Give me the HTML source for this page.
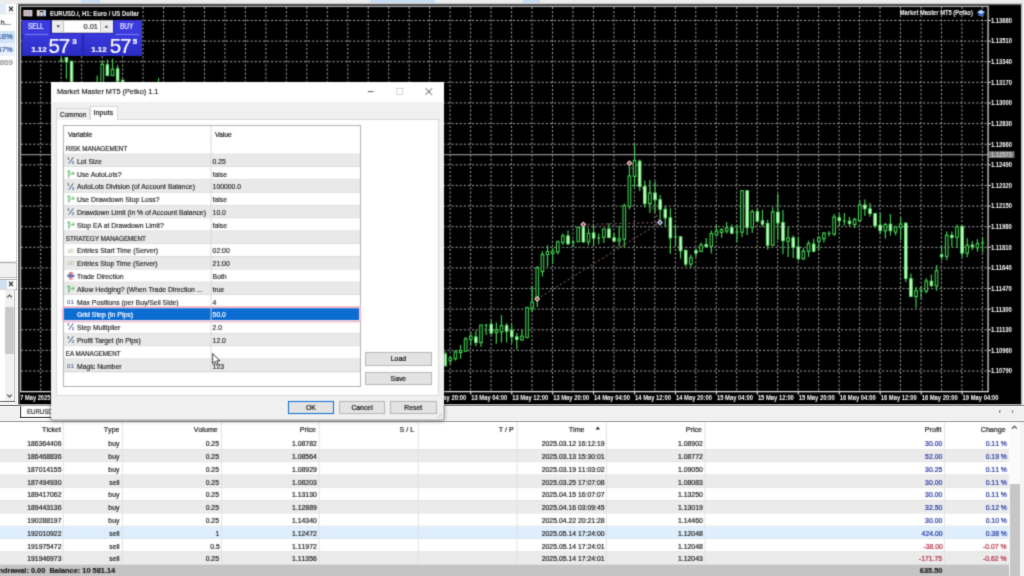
<!DOCTYPE html>
<html><head><meta charset="utf-8"><title>MT5</title>
<style>
*{margin:0;padding:0;box-sizing:border-box}
html,body{width:1024px;height:576px;overflow:hidden;background:#f0f0f0;font-family:"Liberation Sans",sans-serif;}
.a{position:absolute}
.t{position:absolute;white-space:nowrap;line-height:1}
#chart{position:absolute;left:0;top:0;width:1024px;height:576px}
.ax{font:bold 6.4px "Liberation Sans",sans-serif;fill:#fff}
.tm{font:bold 6.6px "Liberation Sans",sans-serif;fill:#fff}
/* dialog */
#dlg{position:absolute;left:51px;top:82px;width:392.6px;height:338.2px;background:#f0f0f0;box-shadow:0 1px 4px rgba(0,0,0,.45), 0 0 1px rgba(0,0,0,.6)}
.row{position:absolute;left:0;width:296px;height:12.8px}
.row .n{position:absolute;left:13px;top:3.8px;-webkit-text-stroke:.14px #222;font-size:6.85px;color:#1a1a1a;white-space:nowrap;line-height:1}
.row .h{position:absolute;left:1.7px;top:3.3px;-webkit-text-stroke:.15px #222;font-size:6.3px;color:#1a1a1a;white-space:nowrap;line-height:1}
.row .v{position:absolute;left:148.6px;top:3.8px;-webkit-text-stroke:.14px #222;font-size:6.85px;color:#1a1a1a;white-space:nowrap;line-height:1}
.row .ic{position:absolute;left:2.5px;top:2px;width:9px;height:9px}
.g{background:#e9e9e9}
.w{background:#fff}
.btn{position:absolute;height:13.2px;background:#e3e3e3;border:1px solid #b6b6b6;font-size:6.85px;color:#1a1a1a;text-align:center;line-height:11.6px}
/* table */
.tr{position:absolute;left:0;width:1009px;height:12.8px}
.tr>span,.th>span{font-kerning:none;position:absolute;top:3.5px;font-size:7.7px;color:#1e1e1e;white-space:nowrap;line-height:1;text-align:right}
.blue{color:#2034a0 !important}
.red{color:#b42a40 !important}
.vl{position:absolute;top:422px;width:1px;height:142px;background:#e2e2e2}
#wrap{-webkit-text-stroke-width:.22px;position:absolute;left:0;top:0;width:1024px;height:576px;overflow:hidden;filter:url(#gb)}
</style></head><body><svg width="0" height="0" style="position:absolute"><filter id="gb" x="0" y="0" width="100%" height="100%" color-interpolation-filters="sRGB"><feConvolveMatrix order="3" kernelMatrix="0.02768 0.11101 0.02768 0.11101 0.44521 0.11101 0.02768 0.11101 0.02768" edgeMode="duplicate" preserveAlpha="true"/></filter></svg><div id="wrap">

<div class="a" style="left:0;top:0;width:1024px;height:4px;background:#ececec"></div>
<div class="a" style="left:81px;top:0;width:19px;height:3px;background:#c9def2"></div>
<div class="a" style="left:370px;top:0;width:65px;height:3px;background:#c9def2"></div>
<div class="a" style="left:523px;top:0;width:17px;height:3px;background:#c9def2"></div>
<div class="a" style="left:0;top:4px;width:16.5px;height:258px;background:#fff"></div>
<div class="a" style="left:0;top:4px;width:6px;height:8.5px;background:#e3ecf6"></div>
<div class="t" style="left:8.4px;top:5px;font-size:8.5px;color:#222;font-weight:bold">×</div>
<div class="a" style="left:0;top:13.2px;width:15px;height:1px;background:#e3e3e3"></div>
<div class="t" style="left:0.5px;top:18.5px;font-size:7.6px;color:#333">h...</div>
<div class="a" style="left:0;top:30.5px;width:14.5px;height:12.5px;background:#cfe3f8"></div>
<div class="t" style="left:-2.4px;top:33px;font-size:7.6px;color:#34569c">16%</div>
<div class="a" style="left:0;top:43px;width:14.5px;height:12.5px;background:#e9f2fc"></div>
<div class="t" style="left:-2.4px;top:45.8px;font-size:7.6px;color:#34569c">67%</div>
<div class="t" style="left:0px;top:58.5px;font-size:7.6px;color:#8a8a8a">869</div>
<div class="a" style="left:0;top:261.6px;width:15px;height:1.2px;background:#9a9a9a"></div>
<div class="a" style="left:0;top:263px;width:16.5px;height:15px;background:#f0f0f0"></div>
<div class="a" style="left:0;top:278.5px;width:16.5px;height:11px;background:#fbfbfb;border-top:1px solid #e0e0e0;border-bottom:1px solid #d8d8d8"></div>
<div class="a" style="left:0;top:279.5px;width:6.5px;height:9.5px;background:#cfe0f3"></div>
<div class="t" style="left:8.6px;top:279.6px;font-size:8.5px;color:#222;font-weight:bold">×</div>
<div class="a" style="left:0;top:290px;width:5px;height:111px;background:#fff"></div>
<div class="a" style="left:5px;top:290px;width:10px;height:111px;background:#f1f1f1"></div>
<div class="a" style="left:5px;top:306.5px;width:9px;height:47px;background:#c9c9c9"></div>
<svg class="a" style="left:5px;top:291px" width="10" height="112"><path d="M2.2 6.4 L4.5 4 L6.8 6.4" fill="none" stroke="#444" stroke-width="1.1"/><path d="M2.2 103.6 L4.5 106 L6.8 103.6" fill="none" stroke="#444" stroke-width="1.1"/></svg>
<div class="a" style="left:0;top:400.6px;width:15px;height:1.2px;background:#8a8a8a"></div>
<svg id="chart" viewBox="0 0 1024 576">
<defs><clipPath id="cc"><rect x="21" y="7" width="967" height="385"/></clipPath></defs>
<rect x="18.2" y="3.8" width="1004.3" height="400.8" fill="#5a5a5a"/>
<rect x="19.9" y="5.2" width="1001.2" height="398.8" fill="#000"/>
<rect x="1021.1" y="4" width="1.4" height="400.6" fill="#cfcfcf"/>
<rect x="1022.5" y="4" width="1.5" height="400.6" fill="#fafafa"/>
<path d="M20.6 392 L20.6 6.3 L988.1 6.3" fill="none" stroke="#b9b9b9" stroke-width="1.3"/>
<g clip-path="url(#cc)" stroke="#a2a2a2" stroke-width="1" stroke-dasharray="2.1 2" fill="none">
<path d="M40.70 7V391.5"/>
<path d="M61.17 7V391.5"/>
<path d="M81.64 7V391.5"/>
<path d="M102.12 7V391.5"/>
<path d="M122.59 7V391.5"/>
<path d="M143.06 7V391.5"/>
<path d="M163.53 7V391.5"/>
<path d="M184.00 7V391.5"/>
<path d="M204.48 7V391.5"/>
<path d="M224.95 7V391.5"/>
<path d="M245.42 7V391.5"/>
<path d="M265.89 7V391.5"/>
<path d="M286.36 7V391.5"/>
<path d="M306.84 7V391.5"/>
<path d="M327.31 7V391.5"/>
<path d="M347.78 7V391.5"/>
<path d="M368.25 7V391.5"/>
<path d="M388.72 7V391.5"/>
<path d="M409.20 7V391.5"/>
<path d="M429.67 7V391.5"/>
<path d="M450.14 7V391.5"/>
<path d="M470.61 7V391.5"/>
<path d="M491.08 7V391.5"/>
<path d="M511.56 7V391.5"/>
<path d="M532.03 7V391.5"/>
<path d="M552.50 7V391.5"/>
<path d="M572.97 7V391.5"/>
<path d="M593.44 7V391.5"/>
<path d="M613.92 7V391.5"/>
<path d="M634.39 7V391.5"/>
<path d="M654.86 7V391.5"/>
<path d="M675.33 7V391.5"/>
<path d="M695.80 7V391.5"/>
<path d="M716.28 7V391.5"/>
<path d="M736.75 7V391.5"/>
<path d="M757.22 7V391.5"/>
<path d="M777.69 7V391.5"/>
<path d="M798.16 7V391.5"/>
<path d="M818.64 7V391.5"/>
<path d="M839.11 7V391.5"/>
<path d="M859.58 7V391.5"/>
<path d="M880.05 7V391.5"/>
<path d="M900.52 7V391.5"/>
<path d="M921.00 7V391.5"/>
<path d="M941.47 7V391.5"/>
<path d="M961.94 7V391.5"/>
<path d="M982.41 7V391.5"/>
<path d="M21 20.50H987.5"/>
<path d="M21 41.12H987.5"/>
<path d="M21 61.74H987.5"/>
<path d="M21 82.36H987.5"/>
<path d="M21 102.98H987.5"/>
<path d="M21 123.60H987.5"/>
<path d="M21 144.22H987.5"/>
<path d="M21 164.84H987.5"/>
<path d="M21 185.46H987.5"/>
<path d="M21 206.08H987.5"/>
<path d="M21 226.70H987.5"/>
<path d="M21 247.32H987.5"/>
<path d="M21 267.94H987.5"/>
<path d="M21 288.56H987.5"/>
<path d="M21 309.18H987.5"/>
<path d="M21 329.80H987.5"/>
<path d="M21 350.42H987.5"/>
<path d="M21 371.04H987.5"/>
</g>
<rect x="21.3" y="7" width="119" height="12.6" fill="#000"/>
<path d="M21 154.6H988" stroke="#8c8c8c" stroke-width="1.1"/>
<g stroke="#94686a" stroke-width="1" stroke-dasharray="2 2.5" fill="none">
<path d="M537.1 299.1L660 222.5"/><path d="M583.3 224.5L660 222.5"/><path d="M629.4 163.3L660 222.5"/>
</g>
<g clip-path="url(#cc)">
<path d="M61.33 57.5V62.5" stroke="#44d455" stroke-width="1.15"/>
<path d="M59.73 60.0H62.93" stroke="#44d455" stroke-width="1.1"/>
<path d="M66.45 57.5V78.8" stroke="#44d455" stroke-width="1.15"/>
<rect x="65.15" y="57.5" width="2.6" height="4.4" fill="#c8ffc8" stroke="#62e06c" stroke-width="0.9"/>
<path d="M71.57 61.2V90.0" stroke="#44d455" stroke-width="1.15"/>
<rect x="70.27" y="61.2" width="2.6" height="28.8" fill="#c8ffc8" stroke="#62e06c" stroke-width="0.9"/>
<path d="M97.16 75.6V90.0" stroke="#44d455" stroke-width="1.15"/>
<path d="M95.56 85.0H98.76" stroke="#44d455" stroke-width="1.1"/>
<path d="M102.28 60.6V90.0" stroke="#44d455" stroke-width="1.15"/>
<rect x="100.98" y="64.4" width="2.6" height="25.6" fill="#000" stroke="#44d455" stroke-width="1.05"/>
<path d="M107.39 59.4V75.6" stroke="#44d455" stroke-width="1.15"/>
<rect x="106.09" y="64.8" width="2.6" height="10.8" fill="#c8ffc8" stroke="#62e06c" stroke-width="0.9"/>
<path d="M112.51 58.8V75.6" stroke="#44d455" stroke-width="1.15"/>
<rect x="111.21" y="69.4" width="2.6" height="6.2" fill="#000" stroke="#44d455" stroke-width="1.05"/>
<path d="M117.63 65.0V81.2" stroke="#44d455" stroke-width="1.15"/>
<rect x="116.33" y="68.8" width="2.6" height="12.5" fill="#c8ffc8" stroke="#62e06c" stroke-width="0.9"/>
<path d="M122.75 80.0V90.0" stroke="#44d455" stroke-width="1.15"/>
<rect x="121.45" y="80.0" width="2.6" height="10.0" fill="#c8ffc8" stroke="#62e06c" stroke-width="0.9"/>
<path d="M158.57 78.0V90.0" stroke="#44d455" stroke-width="1.15"/>
<path d="M156.97 88.0H160.17" stroke="#44d455" stroke-width="1.1"/>
<path d="M445.18 351.2V366.0" stroke="#44d455" stroke-width="1.15"/>
<rect x="443.88" y="353.8" width="2.6" height="12.2" fill="#c8ffc8" stroke="#62e06c" stroke-width="0.9"/>
<path d="M450.30 356.2V364.0" stroke="#44d455" stroke-width="1.15"/>
<rect x="449.00" y="358.1" width="2.6" height="2.5" fill="#000" stroke="#44d455" stroke-width="1.05"/>
<path d="M455.42 350.6V360.6" stroke="#44d455" stroke-width="1.15"/>
<rect x="454.12" y="351.9" width="2.6" height="6.9" fill="#000" stroke="#44d455" stroke-width="1.05"/>
<path d="M460.54 345.0V358.8" stroke="#44d455" stroke-width="1.15"/>
<rect x="459.24" y="350.6" width="2.6" height="1.9" fill="#000" stroke="#44d455" stroke-width="1.05"/>
<path d="M465.65 336.9V351.2" stroke="#44d455" stroke-width="1.15"/>
<rect x="464.35" y="338.8" width="2.6" height="12.5" fill="#000" stroke="#44d455" stroke-width="1.05"/>
<path d="M470.77 332.5V345.6" stroke="#44d455" stroke-width="1.15"/>
<rect x="469.47" y="336.2" width="2.6" height="3.1" fill="#000" stroke="#44d455" stroke-width="1.05"/>
<path d="M475.89 330.6V346.2" stroke="#44d455" stroke-width="1.15"/>
<rect x="474.59" y="336.9" width="2.6" height="5.6" fill="#c8ffc8" stroke="#62e06c" stroke-width="0.9"/>
<path d="M481.01 325.0V346.9" stroke="#44d455" stroke-width="1.15"/>
<rect x="479.71" y="325.0" width="2.6" height="17.5" fill="#000" stroke="#44d455" stroke-width="1.05"/>
<path d="M486.13 324.4V335.0" stroke="#44d455" stroke-width="1.15"/>
<path d="M484.53 325.0H487.73" stroke="#44d455" stroke-width="1.1"/>
<path d="M491.24 320.6V335.0" stroke="#44d455" stroke-width="1.15"/>
<rect x="489.94" y="324.4" width="2.6" height="8.7" fill="#c8ffc8" stroke="#62e06c" stroke-width="0.9"/>
<path d="M496.36 322.5V343.8" stroke="#44d455" stroke-width="1.15"/>
<rect x="495.06" y="330.0" width="2.6" height="2.5" fill="#000" stroke="#44d455" stroke-width="1.05"/>
<path d="M501.48 315.0V342.5" stroke="#44d455" stroke-width="1.15"/>
<rect x="500.18" y="325.6" width="2.6" height="6.3" fill="#000" stroke="#44d455" stroke-width="1.05"/>
<path d="M506.60 323.1V342.5" stroke="#44d455" stroke-width="1.15"/>
<rect x="505.30" y="325.6" width="2.6" height="5.6" fill="#c8ffc8" stroke="#62e06c" stroke-width="0.9"/>
<path d="M511.72 324.4V343.1" stroke="#44d455" stroke-width="1.15"/>
<rect x="510.42" y="330.6" width="2.6" height="6.3" fill="#c8ffc8" stroke="#62e06c" stroke-width="0.9"/>
<path d="M516.83 333.1V349.4" stroke="#44d455" stroke-width="1.15"/>
<rect x="515.53" y="336.9" width="2.6" height="2.5" fill="#c8ffc8" stroke="#62e06c" stroke-width="0.9"/>
<path d="M521.95 330.0V340.6" stroke="#44d455" stroke-width="1.15"/>
<rect x="520.65" y="336.2" width="2.6" height="3.8" fill="#000" stroke="#44d455" stroke-width="1.05"/>
<path d="M527.07 307.5V337.5" stroke="#44d455" stroke-width="1.15"/>
<rect x="525.77" y="307.5" width="2.6" height="30.0" fill="#000" stroke="#44d455" stroke-width="1.05"/>
<path d="M532.19 286.0V312.0" stroke="#44d455" stroke-width="1.15"/>
<rect x="530.89" y="302.2" width="2.6" height="5.8" fill="#000" stroke="#44d455" stroke-width="1.05"/>
<path d="M537.31 266.0V307.0" stroke="#44d455" stroke-width="1.15"/>
<rect x="536.01" y="267.8" width="2.6" height="31.6" fill="#000" stroke="#44d455" stroke-width="1.05"/>
<path d="M542.42 251.2V276.4" stroke="#44d455" stroke-width="1.15"/>
<rect x="541.12" y="254.5" width="2.6" height="17.1" fill="#000" stroke="#44d455" stroke-width="1.05"/>
<path d="M547.54 245.3V266.9" stroke="#44d455" stroke-width="1.15"/>
<rect x="546.24" y="251.6" width="2.6" height="2.9" fill="#000" stroke="#44d455" stroke-width="1.05"/>
<path d="M552.66 247.8V264.0" stroke="#44d455" stroke-width="1.15"/>
<rect x="551.36" y="251.2" width="2.6" height="2.3" fill="#000" stroke="#44d455" stroke-width="1.05"/>
<path d="M557.78 240.5V254.5" stroke="#44d455" stroke-width="1.15"/>
<rect x="556.48" y="241.7" width="2.6" height="10.3" fill="#000" stroke="#44d455" stroke-width="1.05"/>
<path d="M562.90 233.4V244.9" stroke="#44d455" stroke-width="1.15"/>
<rect x="561.60" y="235.9" width="2.6" height="6.5" fill="#000" stroke="#44d455" stroke-width="1.05"/>
<path d="M568.01 230.6V244.9" stroke="#44d455" stroke-width="1.15"/>
<rect x="566.71" y="235.9" width="2.6" height="8.0" fill="#c8ffc8" stroke="#62e06c" stroke-width="0.9"/>
<path d="M573.13 239.7V246.8" stroke="#44d455" stroke-width="1.15"/>
<path d="M571.53 242.4H574.73" stroke="#44d455" stroke-width="1.1"/>
<path d="M578.25 227.3V242.0" stroke="#44d455" stroke-width="1.15"/>
<rect x="576.95" y="227.3" width="2.6" height="14.4" fill="#000" stroke="#44d455" stroke-width="1.05"/>
<path d="M583.37 224.5V242.4" stroke="#44d455" stroke-width="1.15"/>
<rect x="582.07" y="227.3" width="2.6" height="14.7" fill="#c8ffc8" stroke="#62e06c" stroke-width="0.9"/>
<path d="M588.49 228.3V245.5" stroke="#44d455" stroke-width="1.15"/>
<rect x="587.19" y="233.4" width="2.6" height="8.3" fill="#000" stroke="#44d455" stroke-width="1.05"/>
<path d="M593.60 225.8V244.9" stroke="#44d455" stroke-width="1.15"/>
<rect x="592.30" y="232.9" width="2.6" height="5.3" fill="#c8ffc8" stroke="#62e06c" stroke-width="0.9"/>
<path d="M598.72 233.4V244.3" stroke="#44d455" stroke-width="1.15"/>
<path d="M597.12 238.0H600.32" stroke="#44d455" stroke-width="1.1"/>
<path d="M603.84 228.7V243.0" stroke="#44d455" stroke-width="1.15"/>
<rect x="602.54" y="229.0" width="2.6" height="8.3" fill="#000" stroke="#44d455" stroke-width="1.05"/>
<path d="M608.96 223.3V238.2" stroke="#44d455" stroke-width="1.15"/>
<rect x="607.66" y="229.0" width="2.6" height="8.6" fill="#c8ffc8" stroke="#62e06c" stroke-width="0.9"/>
<path d="M614.08 232.9V241.7" stroke="#44d455" stroke-width="1.15"/>
<rect x="612.78" y="237.8" width="2.6" height="3.2" fill="#c8ffc8" stroke="#62e06c" stroke-width="0.9"/>
<path d="M619.19 225.8V246.8" stroke="#44d455" stroke-width="1.15"/>
<rect x="617.89" y="238.8" width="2.6" height="2.2" fill="#000" stroke="#44d455" stroke-width="1.05"/>
<path d="M624.31 203.8V246.8" stroke="#44d455" stroke-width="1.15"/>
<rect x="623.01" y="205.7" width="2.6" height="33.5" fill="#000" stroke="#44d455" stroke-width="1.05"/>
<path d="M629.43 166.3V209.3" stroke="#44d455" stroke-width="1.15"/>
<rect x="628.13" y="175.9" width="2.6" height="30.5" fill="#000" stroke="#44d455" stroke-width="1.05"/>
<path d="M634.55 144.3V187.3" stroke="#44d455" stroke-width="1.15"/>
<rect x="633.25" y="160.6" width="2.6" height="15.8" fill="#000" stroke="#44d455" stroke-width="1.05"/>
<path d="M639.67 159.6V191.1" stroke="#44d455" stroke-width="1.15"/>
<rect x="638.37" y="161.1" width="2.6" height="25.3" fill="#c8ffc8" stroke="#62e06c" stroke-width="0.9"/>
<path d="M644.78 180.6V207.4" stroke="#44d455" stroke-width="1.15"/>
<rect x="643.48" y="186.4" width="2.6" height="17.2" fill="#c8ffc8" stroke="#62e06c" stroke-width="0.9"/>
<path d="M649.90 180.0V213.1" stroke="#44d455" stroke-width="1.15"/>
<rect x="648.60" y="193.0" width="2.6" height="10.6" fill="#000" stroke="#44d455" stroke-width="1.05"/>
<path d="M655.02 181.6V212.2" stroke="#44d455" stroke-width="1.15"/>
<rect x="653.72" y="193.0" width="2.6" height="6.7" fill="#c8ffc8" stroke="#62e06c" stroke-width="0.9"/>
<path d="M660.14 195.0V219.8" stroke="#44d455" stroke-width="1.15"/>
<rect x="658.84" y="199.7" width="2.6" height="9.6" fill="#c8ffc8" stroke="#62e06c" stroke-width="0.9"/>
<path d="M665.26 205.4V227.0" stroke="#44d455" stroke-width="1.15"/>
<rect x="663.96" y="209.3" width="2.6" height="8.6" fill="#c8ffc8" stroke="#62e06c" stroke-width="0.9"/>
<path d="M670.37 208.2V254.0" stroke="#44d455" stroke-width="1.15"/>
<rect x="669.07" y="217.8" width="2.6" height="20.1" fill="#c8ffc8" stroke="#62e06c" stroke-width="0.9"/>
<path d="M675.49 225.3V246.4" stroke="#44d455" stroke-width="1.15"/>
<path d="M673.89 236.8H677.09" stroke="#44d455" stroke-width="1.1"/>
<path d="M680.61 235.9V258.8" stroke="#44d455" stroke-width="1.15"/>
<rect x="679.31" y="236.8" width="2.6" height="14.0" fill="#c8ffc8" stroke="#62e06c" stroke-width="0.9"/>
<path d="M685.73 250.2V266.4" stroke="#44d455" stroke-width="1.15"/>
<rect x="684.43" y="250.2" width="2.6" height="13.9" fill="#c8ffc8" stroke="#62e06c" stroke-width="0.9"/>
<path d="M690.85 254.6V267.4" stroke="#44d455" stroke-width="1.15"/>
<rect x="689.55" y="257.8" width="2.6" height="6.3" fill="#000" stroke="#44d455" stroke-width="1.05"/>
<path d="M695.96 248.3V256.9" stroke="#44d455" stroke-width="1.15"/>
<rect x="694.66" y="250.8" width="2.6" height="2.2" fill="#c8ffc8" stroke="#62e06c" stroke-width="0.9"/>
<path d="M701.08 242.5V252.1" stroke="#44d455" stroke-width="1.15"/>
<rect x="699.78" y="245.0" width="2.6" height="6.5" fill="#000" stroke="#44d455" stroke-width="1.05"/>
<path d="M706.20 238.1V247.3" stroke="#44d455" stroke-width="1.15"/>
<rect x="704.90" y="244.5" width="2.6" height="2.2" fill="#c8ffc8" stroke="#62e06c" stroke-width="0.9"/>
<path d="M711.32 230.5V253.4" stroke="#44d455" stroke-width="1.15"/>
<rect x="710.02" y="233.6" width="2.6" height="12.8" fill="#000" stroke="#44d455" stroke-width="1.05"/>
<path d="M716.44 224.4V235.9" stroke="#44d455" stroke-width="1.15"/>
<rect x="715.14" y="231.1" width="2.6" height="3.8" fill="#000" stroke="#44d455" stroke-width="1.05"/>
<path d="M721.55 228.2V237.8" stroke="#44d455" stroke-width="1.15"/>
<rect x="720.25" y="229.7" width="2.6" height="2.7" fill="#000" stroke="#44d455" stroke-width="1.05"/>
<path d="M726.67 222.1V233.6" stroke="#44d455" stroke-width="1.15"/>
<rect x="725.37" y="227.8" width="2.6" height="3.3" fill="#000" stroke="#44d455" stroke-width="1.05"/>
<path d="M731.79 224.4V234.0" stroke="#44d455" stroke-width="1.15"/>
<rect x="730.49" y="227.6" width="2.6" height="5.7" fill="#c8ffc8" stroke="#62e06c" stroke-width="0.9"/>
<path d="M736.91 224.7V241.7" stroke="#44d455" stroke-width="1.15"/>
<path d="M735.31 232.0H738.51" stroke="#44d455" stroke-width="1.1"/>
<path d="M742.03 190.1V236.9" stroke="#44d455" stroke-width="1.15"/>
<rect x="740.73" y="190.7" width="2.6" height="41.5" fill="#000" stroke="#44d455" stroke-width="1.05"/>
<path d="M747.14 190.1V235.0" stroke="#44d455" stroke-width="1.15"/>
<rect x="745.84" y="190.7" width="2.6" height="36.7" fill="#c8ffc8" stroke="#62e06c" stroke-width="0.9"/>
<path d="M752.26 209.4V233.0" stroke="#44d455" stroke-width="1.15"/>
<rect x="750.96" y="211.7" width="2.6" height="15.7" fill="#000" stroke="#44d455" stroke-width="1.05"/>
<path d="M757.38 207.7V222.6" stroke="#44d455" stroke-width="1.15"/>
<rect x="756.08" y="211.7" width="2.6" height="9.4" fill="#c8ffc8" stroke="#62e06c" stroke-width="0.9"/>
<path d="M762.50 209.8V226.8" stroke="#44d455" stroke-width="1.15"/>
<rect x="761.20" y="220.8" width="2.6" height="3.4" fill="#c8ffc8" stroke="#62e06c" stroke-width="0.9"/>
<path d="M767.62 219.7V249.5" stroke="#44d455" stroke-width="1.15"/>
<rect x="766.32" y="223.5" width="2.6" height="21.7" fill="#c8ffc8" stroke="#62e06c" stroke-width="0.9"/>
<path d="M772.73 207.3V246.0" stroke="#44d455" stroke-width="1.15"/>
<rect x="771.43" y="212.0" width="2.6" height="33.2" fill="#000" stroke="#44d455" stroke-width="1.05"/>
<path d="M777.85 193.9V239.8" stroke="#44d455" stroke-width="1.15"/>
<rect x="776.55" y="212.1" width="2.6" height="10.9" fill="#c8ffc8" stroke="#62e06c" stroke-width="0.9"/>
<path d="M782.97 210.1V254.1" stroke="#44d455" stroke-width="1.15"/>
<rect x="781.67" y="222.5" width="2.6" height="18.2" fill="#c8ffc8" stroke="#62e06c" stroke-width="0.9"/>
<path d="M788.09 227.3V257.0" stroke="#44d455" stroke-width="1.15"/>
<rect x="786.79" y="237.8" width="2.6" height="3.5" fill="#000" stroke="#44d455" stroke-width="1.05"/>
<path d="M793.21 235.5V258.0" stroke="#44d455" stroke-width="1.15"/>
<rect x="791.91" y="237.8" width="2.6" height="9.6" fill="#c8ffc8" stroke="#62e06c" stroke-width="0.9"/>
<path d="M798.32 236.9V260.4" stroke="#44d455" stroke-width="1.15"/>
<rect x="797.02" y="247.0" width="2.6" height="11.8" fill="#c8ffc8" stroke="#62e06c" stroke-width="0.9"/>
<path d="M803.44 248.0V259.8" stroke="#44d455" stroke-width="1.15"/>
<rect x="802.14" y="251.2" width="2.6" height="7.6" fill="#000" stroke="#44d455" stroke-width="1.05"/>
<path d="M808.56 240.7V256.9" stroke="#44d455" stroke-width="1.15"/>
<rect x="807.26" y="243.6" width="2.6" height="7.6" fill="#000" stroke="#44d455" stroke-width="1.05"/>
<path d="M813.68 238.8V252.2" stroke="#44d455" stroke-width="1.15"/>
<rect x="812.38" y="244.1" width="2.6" height="7.1" fill="#c8ffc8" stroke="#62e06c" stroke-width="0.9"/>
<path d="M818.80 235.9V250.2" stroke="#44d455" stroke-width="1.15"/>
<rect x="817.50" y="237.8" width="2.6" height="3.5" fill="#000" stroke="#44d455" stroke-width="1.05"/>
<path d="M823.91 232.1V242.6" stroke="#44d455" stroke-width="1.15"/>
<rect x="822.61" y="233.0" width="2.6" height="5.8" fill="#000" stroke="#44d455" stroke-width="1.05"/>
<path d="M829.03 231.1V236.5" stroke="#44d455" stroke-width="1.15"/>
<path d="M827.43 233.5H830.63" stroke="#44d455" stroke-width="1.1"/>
<path d="M834.15 213.9V235.9" stroke="#44d455" stroke-width="1.15"/>
<rect x="832.85" y="217.2" width="2.6" height="16.8" fill="#000" stroke="#44d455" stroke-width="1.05"/>
<path d="M839.27 213.9V226.4" stroke="#44d455" stroke-width="1.15"/>
<rect x="837.97" y="217.8" width="2.6" height="2.8" fill="#c8ffc8" stroke="#62e06c" stroke-width="0.9"/>
<path d="M844.39 213.0V225.4" stroke="#44d455" stroke-width="1.15"/>
<path d="M842.79 221.0H845.99" stroke="#44d455" stroke-width="1.1"/>
<path d="M849.50 216.8V226.4" stroke="#44d455" stroke-width="1.15"/>
<rect x="848.20" y="221.2" width="2.6" height="2.3" fill="#c8ffc8" stroke="#62e06c" stroke-width="0.9"/>
<path d="M854.62 217.8V228.3" stroke="#44d455" stroke-width="1.15"/>
<rect x="853.32" y="219.3" width="2.6" height="5.2" fill="#000" stroke="#44d455" stroke-width="1.05"/>
<path d="M859.74 200.6V222.5" stroke="#44d455" stroke-width="1.15"/>
<rect x="858.44" y="205.0" width="2.6" height="15.6" fill="#000" stroke="#44d455" stroke-width="1.05"/>
<path d="M864.86 199.6V215.9" stroke="#44d455" stroke-width="1.15"/>
<rect x="863.56" y="205.0" width="2.6" height="3.8" fill="#c8ffc8" stroke="#62e06c" stroke-width="0.9"/>
<path d="M869.98 202.9V216.8" stroke="#44d455" stroke-width="1.15"/>
<rect x="868.68" y="208.8" width="2.6" height="4.8" fill="#c8ffc8" stroke="#62e06c" stroke-width="0.9"/>
<path d="M875.09 213.0V227.7" stroke="#44d455" stroke-width="1.15"/>
<rect x="873.79" y="213.6" width="2.6" height="12.2" fill="#c8ffc8" stroke="#62e06c" stroke-width="0.9"/>
<path d="M880.21 213.6V234.0" stroke="#44d455" stroke-width="1.15"/>
<rect x="878.91" y="225.1" width="2.6" height="5.6" fill="#c8ffc8" stroke="#62e06c" stroke-width="0.9"/>
<path d="M885.33 223.0V238.5" stroke="#44d455" stroke-width="1.15"/>
<rect x="884.03" y="224.5" width="2.6" height="6.3" fill="#000" stroke="#44d455" stroke-width="1.05"/>
<path d="M890.45 214.1V235.6" stroke="#44d455" stroke-width="1.15"/>
<rect x="889.15" y="224.2" width="2.6" height="6.5" fill="#c8ffc8" stroke="#62e06c" stroke-width="0.9"/>
<path d="M895.57 225.6V235.4" stroke="#44d455" stroke-width="1.15"/>
<rect x="894.27" y="226.8" width="2.6" height="5.3" fill="#000" stroke="#44d455" stroke-width="1.05"/>
<path d="M900.68 217.0V240.0" stroke="#44d455" stroke-width="1.15"/>
<rect x="899.38" y="224.0" width="2.6" height="3.3" fill="#000" stroke="#44d455" stroke-width="1.05"/>
<path d="M905.80 222.0V282.0" stroke="#44d455" stroke-width="1.15"/>
<rect x="904.50" y="223.2" width="2.6" height="55.2" fill="#c8ffc8" stroke="#62e06c" stroke-width="0.9"/>
<path d="M910.92 273.6V296.5" stroke="#44d455" stroke-width="1.15"/>
<rect x="909.62" y="278.7" width="2.6" height="17.8" fill="#c8ffc8" stroke="#62e06c" stroke-width="0.9"/>
<path d="M916.04 286.9V308.0" stroke="#44d455" stroke-width="1.15"/>
<rect x="914.74" y="290.8" width="2.6" height="5.7" fill="#000" stroke="#44d455" stroke-width="1.05"/>
<path d="M921.16 286.0V298.4" stroke="#44d455" stroke-width="1.15"/>
<path d="M919.56 290.8H922.76" stroke="#44d455" stroke-width="1.1"/>
<path d="M926.27 278.3V293.2" stroke="#44d455" stroke-width="1.15"/>
<rect x="924.97" y="281.2" width="2.6" height="10.1" fill="#000" stroke="#44d455" stroke-width="1.05"/>
<path d="M931.39 274.5V286.9" stroke="#44d455" stroke-width="1.15"/>
<rect x="930.09" y="281.2" width="2.6" height="4.4" fill="#c8ffc8" stroke="#62e06c" stroke-width="0.9"/>
<path d="M936.51 265.0V290.8" stroke="#44d455" stroke-width="1.15"/>
<rect x="935.21" y="270.7" width="2.6" height="15.3" fill="#000" stroke="#44d455" stroke-width="1.05"/>
<path d="M941.63 245.9V260.2" stroke="#44d455" stroke-width="1.15"/>
<rect x="940.33" y="254.8" width="2.6" height="1.9" fill="#c8ffc8" stroke="#62e06c" stroke-width="0.9"/>
<path d="M946.75 231.5V260.2" stroke="#44d455" stroke-width="1.15"/>
<rect x="945.45" y="235.3" width="2.6" height="21.1" fill="#000" stroke="#44d455" stroke-width="1.05"/>
<path d="M951.86 231.5V246.8" stroke="#44d455" stroke-width="1.15"/>
<rect x="950.56" y="235.3" width="2.6" height="2.3" fill="#c8ffc8" stroke="#62e06c" stroke-width="0.9"/>
<path d="M956.98 224.8V247.8" stroke="#44d455" stroke-width="1.15"/>
<rect x="955.68" y="226.7" width="2.6" height="10.6" fill="#000" stroke="#44d455" stroke-width="1.05"/>
<path d="M962.10 224.8V256.9" stroke="#44d455" stroke-width="1.15"/>
<rect x="960.80" y="226.7" width="2.6" height="26.4" fill="#c8ffc8" stroke="#62e06c" stroke-width="0.9"/>
<path d="M967.22 238.2V257.3" stroke="#44d455" stroke-width="1.15"/>
<rect x="965.92" y="245.3" width="2.6" height="7.8" fill="#000" stroke="#44d455" stroke-width="1.05"/>
<path d="M972.34 241.1V250.1" stroke="#44d455" stroke-width="1.15"/>
<rect x="971.04" y="245.0" width="2.6" height="1.8" fill="#c8ffc8" stroke="#62e06c" stroke-width="0.9"/>
<path d="M977.45 239.2V251.6" stroke="#44d455" stroke-width="1.15"/>
<rect x="976.15" y="243.6" width="2.6" height="4.2" fill="#000" stroke="#44d455" stroke-width="1.05"/>
<path d="M982.57 237.3V252.5" stroke="#44d455" stroke-width="1.15"/>
<path d="M980.97 243.0H984.17" stroke="#44d455" stroke-width="1.1"/>
</g>
<path d="M537.1 296.1L540.1 299.1L537.1 302.1L534.1 299.1Z" fill="#f4e2e4"/><path d="M537.1 297.6L538.6 299.1L537.1 300.6L535.6 299.1Z" fill="#a03838"/>
<path d="M583.3 221.5L586.3 224.5L583.3 227.5L580.3 224.5Z" fill="#f4e2e4"/><path d="M583.3 223.0L584.8 224.5L583.3 226.0L581.8 224.5Z" fill="#a03838"/>
<path d="M629.4 160.3L632.4 163.3L629.4 166.3L626.4 163.3Z" fill="#f4e2e4"/><path d="M629.4 161.8L630.9 163.3L629.4 164.8L627.9 163.3Z" fill="#a03838"/>
<path d="M660 219.5L663 222.5L660 225.5L657 222.5Z" fill="#f4e2e4"/><path d="M660 221.0L661.5 222.5L660 224.0L658.5 222.5Z" fill="#2a50c8"/>
<path d="M988.1 5.8V392" stroke="#c4c4c4" stroke-width="1.4"/>
<path d="M20 391.6H988.8" stroke="#e4e4e4" stroke-width="1.3"/>
<path d="M988 20.50H991" stroke="#ddd" stroke-width="1"/>
<text class="ax" x="990.9" y="22.85" textLength="21" lengthAdjust="spacingAndGlyphs">1.13680</text>
<path d="M988 41.12H991" stroke="#ddd" stroke-width="1"/>
<text class="ax" x="990.9" y="43.47" textLength="21" lengthAdjust="spacingAndGlyphs">1.13510</text>
<path d="M988 61.74H991" stroke="#ddd" stroke-width="1"/>
<text class="ax" x="990.9" y="64.09" textLength="21" lengthAdjust="spacingAndGlyphs">1.13340</text>
<path d="M988 82.36H991" stroke="#ddd" stroke-width="1"/>
<text class="ax" x="990.9" y="84.71" textLength="21" lengthAdjust="spacingAndGlyphs">1.13170</text>
<path d="M988 102.98H991" stroke="#ddd" stroke-width="1"/>
<text class="ax" x="990.9" y="105.33" textLength="21" lengthAdjust="spacingAndGlyphs">1.13000</text>
<path d="M988 123.60H991" stroke="#ddd" stroke-width="1"/>
<text class="ax" x="990.9" y="125.95" textLength="21" lengthAdjust="spacingAndGlyphs">1.12830</text>
<path d="M988 144.22H991" stroke="#ddd" stroke-width="1"/>
<text class="ax" x="990.9" y="146.57" textLength="21" lengthAdjust="spacingAndGlyphs">1.12660</text>
<path d="M988 164.84H991" stroke="#ddd" stroke-width="1"/>
<text class="ax" x="990.9" y="167.19" textLength="21" lengthAdjust="spacingAndGlyphs">1.12490</text>
<path d="M988 185.46H991" stroke="#ddd" stroke-width="1"/>
<text class="ax" x="990.9" y="187.81" textLength="21" lengthAdjust="spacingAndGlyphs">1.12320</text>
<path d="M988 206.08H991" stroke="#ddd" stroke-width="1"/>
<text class="ax" x="990.9" y="208.43" textLength="21" lengthAdjust="spacingAndGlyphs">1.12150</text>
<path d="M988 226.70H991" stroke="#ddd" stroke-width="1"/>
<text class="ax" x="990.9" y="229.05" textLength="21" lengthAdjust="spacingAndGlyphs">1.11980</text>
<path d="M988 247.32H991" stroke="#ddd" stroke-width="1"/>
<text class="ax" x="990.9" y="249.67" textLength="21" lengthAdjust="spacingAndGlyphs">1.11810</text>
<path d="M988 267.94H991" stroke="#ddd" stroke-width="1"/>
<text class="ax" x="990.9" y="270.29" textLength="21" lengthAdjust="spacingAndGlyphs">1.11640</text>
<path d="M988 288.56H991" stroke="#ddd" stroke-width="1"/>
<text class="ax" x="990.9" y="290.91" textLength="21" lengthAdjust="spacingAndGlyphs">1.11470</text>
<path d="M988 309.18H991" stroke="#ddd" stroke-width="1"/>
<text class="ax" x="990.9" y="311.53" textLength="21" lengthAdjust="spacingAndGlyphs">1.11300</text>
<path d="M988 329.80H991" stroke="#ddd" stroke-width="1"/>
<text class="ax" x="990.9" y="332.15" textLength="21" lengthAdjust="spacingAndGlyphs">1.11130</text>
<path d="M988 350.42H991" stroke="#ddd" stroke-width="1"/>
<text class="ax" x="990.9" y="352.77" textLength="21" lengthAdjust="spacingAndGlyphs">1.10960</text>
<path d="M988 371.04H991" stroke="#ddd" stroke-width="1"/>
<text class="ax" x="990.9" y="373.39" textLength="21" lengthAdjust="spacingAndGlyphs">1.10790</text>
<rect x="988.8" y="151.3" width="25.6" height="6.6" fill="#7d7d7d"/>
<text class="ax" x="990.9" y="156.95" textLength="21" lengthAdjust="spacingAndGlyphs" style="fill:#c9c9c9">1.12573</text>
<path d="M429.83 391.5V394.5" stroke="#e4e4e4" stroke-width="1.1"/>
<text class="tm" x="430.33" y="400.3" textLength="36" lengthAdjust="spacingAndGlyphs">12 May 20:00</text>
<path d="M470.77 391.5V394.5" stroke="#e4e4e4" stroke-width="1.1"/>
<text class="tm" x="471.27" y="400.3" textLength="36" lengthAdjust="spacingAndGlyphs">13 May 04:00</text>
<path d="M511.72 391.5V394.5" stroke="#e4e4e4" stroke-width="1.1"/>
<text class="tm" x="512.22" y="400.3" textLength="36" lengthAdjust="spacingAndGlyphs">13 May 12:00</text>
<path d="M552.66 391.5V394.5" stroke="#e4e4e4" stroke-width="1.1"/>
<text class="tm" x="553.16" y="400.3" textLength="36" lengthAdjust="spacingAndGlyphs">13 May 20:00</text>
<path d="M593.60 391.5V394.5" stroke="#e4e4e4" stroke-width="1.1"/>
<text class="tm" x="594.10" y="400.3" textLength="36" lengthAdjust="spacingAndGlyphs">14 May 04:00</text>
<path d="M634.55 391.5V394.5" stroke="#e4e4e4" stroke-width="1.1"/>
<text class="tm" x="635.05" y="400.3" textLength="36" lengthAdjust="spacingAndGlyphs">14 May 12:00</text>
<path d="M675.49 391.5V394.5" stroke="#e4e4e4" stroke-width="1.1"/>
<text class="tm" x="675.99" y="400.3" textLength="36" lengthAdjust="spacingAndGlyphs">14 May 20:00</text>
<path d="M716.44 391.5V394.5" stroke="#e4e4e4" stroke-width="1.1"/>
<text class="tm" x="716.94" y="400.3" textLength="36" lengthAdjust="spacingAndGlyphs">15 May 04:00</text>
<path d="M757.38 391.5V394.5" stroke="#e4e4e4" stroke-width="1.1"/>
<text class="tm" x="757.88" y="400.3" textLength="36" lengthAdjust="spacingAndGlyphs">15 May 12:00</text>
<path d="M798.32 391.5V394.5" stroke="#e4e4e4" stroke-width="1.1"/>
<text class="tm" x="798.82" y="400.3" textLength="36" lengthAdjust="spacingAndGlyphs">15 May 20:00</text>
<path d="M839.27 391.5V394.5" stroke="#e4e4e4" stroke-width="1.1"/>
<text class="tm" x="839.77" y="400.3" textLength="36" lengthAdjust="spacingAndGlyphs">16 May 04:00</text>
<path d="M880.21 391.5V394.5" stroke="#e4e4e4" stroke-width="1.1"/>
<text class="tm" x="880.71" y="400.3" textLength="36" lengthAdjust="spacingAndGlyphs">16 May 12:00</text>
<path d="M921.16 391.5V394.5" stroke="#e4e4e4" stroke-width="1.1"/>
<text class="tm" x="921.66" y="400.3" textLength="36" lengthAdjust="spacingAndGlyphs">16 May 20:00</text>
<path d="M962.10 391.5V394.5" stroke="#e4e4e4" stroke-width="1.1"/>
<text class="tm" x="962.60" y="400.3" textLength="36" lengthAdjust="spacingAndGlyphs">19 May 04:00</text>
<text class="tm" x="20.3" y="400.2" textLength="30" lengthAdjust="spacingAndGlyphs">7 May 2025</text>
<text x="50" y="15.7" style="font:bold 6.9px 'Liberation Sans',sans-serif;fill:#fff" textLength="89" lengthAdjust="spacingAndGlyphs">EURUSD.i, H1:  Euro / US Dollar</text>
<text x="899.8" y="15.3" style="font:bold 6.3px 'Liberation Sans',sans-serif;fill:#fff" textLength="73" lengthAdjust="spacingAndGlyphs">Market Master MT5 (Petko)</text>
<g><path d="M976.8 12.2L981 9.6L985.2 12.2L981 14.6Z" fill="#8fbcff"/><path d="M978.3 13.2V15.6Q981 17 983.7 15.6V13.2L981 14.8Z" fill="#3f78d8"/><path d="M979.3 12.1H982.7" stroke="#fff" stroke-width=".9"/></g>
<g><rect x="23.4" y="10" width="8.8" height="6.2" fill="#f4dcdc"/><rect x="27" y="10" width="5.2" height="6.2" fill="#d8e6f4"/><path d="M23.4 12H32.2M23.4 14.1H32.2" stroke="#b06060" stroke-width=".6"/><path d="M26.2 10V16.2M29.2 10V16.2" stroke="#6a7a9a" stroke-width=".5"/></g>
<g><rect x="36.8" y="10" width="3" height="6.2" fill="#f2d2d2"/><rect x="40.3" y="12" width="2.4" height="4.2" fill="#e8eef8"/><rect x="43.2" y="10" width="2.8" height="6.2" fill="#b8d2f2"/><path d="M39.8 10.4H43.4" stroke="#fff" stroke-width=".9"/></g>
</svg>
<div class="a" style="left:21.8px;top:19.6px;width:120.4px;height:36.8px;background:#2626b4"></div>
<div class="a" style="left:21.8px;top:19.6px;width:28.6px;height:14.2px;background:#3a3ade"></div>
<div class="a" style="left:113.8px;top:19.6px;width:28.4px;height:14.2px;background:#3a3ade"></div>
<div class="a" style="left:22.5px;top:34.4px;width:59.8px;height:21.8px;background:linear-gradient(#3a3ade,#2a2ac2)"></div>
<div class="a" style="left:83.6px;top:34.4px;width:58.6px;height:21.8px;background:linear-gradient(#3a3ade,#2a2ac2)"></div>
<div class="a" style="left:24.5px;top:33.8px;width:23px;height:.8px;background:#7c7cf0"></div>
<div class="a" style="left:116px;top:33.8px;width:23px;height:.8px;background:#7c7cf0"></div>
<div class="t" style="left:27.8px;top:22.6px;font-size:8.2px;color:#eeeeff;-webkit-text-stroke:.2px #eef"><span style="display:inline-block;transform:scaleX(0.78);transform-origin:left center">SELL</span></div>
<div class="t" style="left:120.4px;top:22.6px;font-size:8.2px;color:#eeeeff;-webkit-text-stroke:.2px #eef"><span style="display:inline-block;transform:scaleX(0.8);transform-origin:left center">BUY</span></div>
<div class="a" style="left:51.9px;top:20.2px;width:61.3px;height:12.5px;background:#fff;border:.6px solid #c9c9c9"></div>
<div class="a" style="left:52.3px;top:20.6px;width:12.2px;height:11.7px;background:#ececec;border-right:.6px solid #c2c2c2"></div>
<div class="a" style="left:100.4px;top:20.6px;width:12.4px;height:11.7px;background:#ececec;border-left:.6px solid #c2c2c2"></div>
<svg class="a" style="left:52px;top:20px" width="62" height="13"><path d="M4.4 5.6H8L6.2 7.6Z" fill="#222"/><path d="M52.6 7.4H56.2L54.4 5.4Z" fill="#222"/></svg>
<div class="t" style="left:83.6px;top:22.5px;font-size:7.4px;color:#3a3a3a">0.01</div>
<div class="t" style="left:31.2px;top:46.4px;font-size:8px;font-weight:bold;color:#fff">1.12</div>
<div class="t" style="left:48.4px;top:36.2px;font-size:20.6px;color:#fff;letter-spacing:-1.2px">57</div>
<div class="t" style="left:72.2px;top:38px;font-size:8px;font-weight:bold;color:#fff">3</div>
<div class="t" style="left:91.2px;top:46.4px;font-size:8px;font-weight:bold;color:#fff">1.12</div>
<div class="t" style="left:109.7px;top:36.2px;font-size:20.6px;color:#fff;letter-spacing:-1.2px">57</div>
<div class="t" style="left:132.7px;top:38px;font-size:8px;font-weight:bold;color:#fff">5</div>
<div class="a" style="left:0;top:404.6px;width:1024px;height:1px;background:#b4b4b4"></div>
<div class="a" style="left:19.6px;top:406.2px;width:60px;height:11.8px;background:#fff;border-left:1.2px solid #4a4a4a;border-bottom:1.2px solid #4a4a4a"></div>
<div class="t" style="left:26.8px;top:408.3px;font-size:7.6px;color:#333"><span style="display:inline-block;transform:scaleX(0.8);transform-origin:left center">EURUSD.i,H1</span></div>
<div class="t" style="left:998.5px;top:408px;font-size:7px;color:#b5b5b5">‹</div>
<div class="t" style="left:1011.5px;top:408px;font-size:7px;color:#b5b5b5">›</div>
<div class="a" style="left:0;top:420.6px;width:1024px;height:144px;background:#fff;border-top:1px solid #bcbcbc"></div>
<div class="th a" style="left:0;top:422.6px;width:1009px;height:13.8px">
<span style="right:948.4px;top:3.2px;font-size:7.9px;color:#222"><span style="display:inline-block;transform:scaleX(0.9);transform-origin:right center">Ticket</span></span>
<span style="right:889.8px;top:3.2px;font-size:7.9px;color:#222"><span style="display:inline-block;transform:scaleX(0.9);transform-origin:right center">Type</span></span>
<span style="right:790.8px;top:3.2px;font-size:7.9px;color:#222"><span style="display:inline-block;transform:scaleX(0.9);transform-origin:right center">Volume</span></span>
<span style="right:692.6px;top:3.2px;font-size:7.9px;color:#222"><span style="display:inline-block;transform:scaleX(0.9);transform-origin:right center">Price</span></span>
<span style="right:594.4px;top:3.2px;font-size:7.9px;color:#222"><span style="display:inline-block;transform:scaleX(0.9);transform-origin:right center">S / L</span></span>
<span style="right:495.6px;top:3.2px;font-size:7.9px;color:#222"><span style="display:inline-block;transform:scaleX(0.9);transform-origin:right center">T / P</span></span>
<span style="right:424.6px;top:3.2px;font-size:7.9px;color:#222"><span style="display:inline-block;transform:scaleX(0.9);transform-origin:right center">Time</span></span>
<span style="right:307.4px;top:3.2px;font-size:7.9px;color:#222"><span style="display:inline-block;transform:scaleX(0.9);transform-origin:right center">Price</span></span>
<span style="right:67.4px;top:3.2px;font-size:7.9px;color:#222"><span style="display:inline-block;transform:scaleX(0.9);transform-origin:right center">Profit</span></span>
<span style="right:3.6px;top:3.2px;font-size:7.9px;color:#222"><span style="display:inline-block;transform:scaleX(0.9);transform-origin:right center">Change</span></span>
</div>
<svg class="a" style="left:594px;top:424px" width="8" height="8"><path d="M1.6 5.4H6L3.8 2.6Z" fill="#222"/></svg>
<svg class="a" style="left:0;top:0" width="1024" height="576">
<rect x="0" y="436.60" width="1009" height="12.85" fill="#fff"/>
<rect x="0" y="448.95" width="1009" height=".9" fill="#d9d9d9"/>
<rect x="0" y="449.40" width="1009" height="12.85" fill="#ebebeb"/>
<rect x="0" y="461.75" width="1009" height=".9" fill="#d9d9d9"/>
<rect x="0" y="462.20" width="1009" height="12.85" fill="#fff"/>
<rect x="0" y="474.55" width="1009" height=".9" fill="#d9d9d9"/>
<rect x="0" y="475.00" width="1009" height="12.85" fill="#ebebeb"/>
<rect x="0" y="487.35" width="1009" height=".9" fill="#d9d9d9"/>
<rect x="0" y="487.80" width="1009" height="12.85" fill="#fff"/>
<rect x="0" y="500.15" width="1009" height=".9" fill="#d9d9d9"/>
<rect x="0" y="500.60" width="1009" height="12.85" fill="#ebebeb"/>
<rect x="0" y="512.95" width="1009" height=".9" fill="#d9d9d9"/>
<rect x="0" y="513.40" width="1009" height="12.85" fill="#fff"/>
<rect x="0" y="525.75" width="1009" height=".9" fill="#d9d9d9"/>
<rect x="0" y="526.20" width="1009" height="12.85" fill="#deeefc"/>
<rect x="0" y="538.55" width="1009" height=".9" fill="#d9d9d9"/>
<rect x="0" y="539.00" width="1009" height="12.85" fill="#fff"/>
<rect x="0" y="551.35" width="1009" height=".9" fill="#d9d9d9"/>
<rect x="0" y="551.80" width="1009" height="12.85" fill="#ebebeb"/>
<rect x="0" y="564.15" width="1009" height=".9" fill="#d9d9d9"/>
<rect x="62.75" y="422" width=".9" height="142.5" fill="#e0e0e0"/>
<rect x="121.95" y="422" width=".9" height="142.5" fill="#e0e0e0"/>
<rect x="220.95000000000002" y="422" width=".9" height="142.5" fill="#e0e0e0"/>
<rect x="318.75" y="422" width=".9" height="142.5" fill="#e0e0e0"/>
<rect x="417.75" y="422" width=".9" height="142.5" fill="#e0e0e0"/>
<rect x="516.55" y="422" width=".9" height="142.5" fill="#e0e0e0"/>
<rect x="605.9499999999999" y="422" width=".9" height="142.5" fill="#e0e0e0"/>
<rect x="704.55" y="422" width=".9" height="142.5" fill="#e0e0e0"/>
<rect x="944.15" y="422" width=".9" height="142.5" fill="#e0e0e0"/>
</svg>
<div class="tr" style="top:436.6px">
<span class="" style="right:947.7px"><span style="display:inline-block;transform:scaleX(0.89);transform-origin:right center">186364406</span></span>
<span class="" style="right:889.2px"><span style="display:inline-block;transform:scaleX(0.89);transform-origin:right center">buy</span></span>
<span class="" style="right:789.8px"><span style="display:inline-block;transform:scaleX(0.89);transform-origin:right center">0.25</span></span>
<span class="" style="right:691.8px"><span style="display:inline-block;transform:scaleX(0.89);transform-origin:right center">1.08782</span></span>
<span class="" style="right:404.4px"><span style="display:inline-block;transform:scaleX(0.89);transform-origin:right center">2025.03.12 16:12:19</span></span>
<span class="" style="right:306.2px"><span style="display:inline-block;transform:scaleX(0.89);transform-origin:right center">1.08902</span></span>
<span class="blue" style="right:66.6px"><span style="display:inline-block;transform:scaleX(0.89);transform-origin:right center">30.00</span></span>
<span class="blue" style="right:2.4px"><span style="display:inline-block;transform:scaleX(0.89);transform-origin:right center">0.11 %</span></span>
</div>
<div class="tr" style="top:449.4px">
<span class="" style="right:947.7px"><span style="display:inline-block;transform:scaleX(0.89);transform-origin:right center">186468836</span></span>
<span class="" style="right:889.2px"><span style="display:inline-block;transform:scaleX(0.89);transform-origin:right center">buy</span></span>
<span class="" style="right:789.8px"><span style="display:inline-block;transform:scaleX(0.89);transform-origin:right center">0.25</span></span>
<span class="" style="right:691.8px"><span style="display:inline-block;transform:scaleX(0.89);transform-origin:right center">1.08564</span></span>
<span class="" style="right:404.4px"><span style="display:inline-block;transform:scaleX(0.89);transform-origin:right center">2025.03.13 15:30:01</span></span>
<span class="" style="right:306.2px"><span style="display:inline-block;transform:scaleX(0.89);transform-origin:right center">1.08772</span></span>
<span class="blue" style="right:66.6px"><span style="display:inline-block;transform:scaleX(0.89);transform-origin:right center">52.00</span></span>
<span class="blue" style="right:2.4px"><span style="display:inline-block;transform:scaleX(0.89);transform-origin:right center">0.19 %</span></span>
</div>
<div class="tr" style="top:462.2px">
<span class="" style="right:947.7px"><span style="display:inline-block;transform:scaleX(0.89);transform-origin:right center">187014155</span></span>
<span class="" style="right:889.2px"><span style="display:inline-block;transform:scaleX(0.89);transform-origin:right center">buy</span></span>
<span class="" style="right:789.8px"><span style="display:inline-block;transform:scaleX(0.89);transform-origin:right center">0.25</span></span>
<span class="" style="right:691.8px"><span style="display:inline-block;transform:scaleX(0.89);transform-origin:right center">1.08929</span></span>
<span class="" style="right:404.4px"><span style="display:inline-block;transform:scaleX(0.89);transform-origin:right center">2025.03.19 11:03:02</span></span>
<span class="" style="right:306.2px"><span style="display:inline-block;transform:scaleX(0.89);transform-origin:right center">1.09050</span></span>
<span class="blue" style="right:66.6px"><span style="display:inline-block;transform:scaleX(0.89);transform-origin:right center">30.25</span></span>
<span class="blue" style="right:2.4px"><span style="display:inline-block;transform:scaleX(0.89);transform-origin:right center">0.11 %</span></span>
</div>
<div class="tr" style="top:475.0px">
<span class="" style="right:947.7px"><span style="display:inline-block;transform:scaleX(0.89);transform-origin:right center">187494930</span></span>
<span class="" style="right:889.2px"><span style="display:inline-block;transform:scaleX(0.89);transform-origin:right center">sell</span></span>
<span class="" style="right:789.8px"><span style="display:inline-block;transform:scaleX(0.89);transform-origin:right center">0.25</span></span>
<span class="" style="right:691.8px"><span style="display:inline-block;transform:scaleX(0.89);transform-origin:right center">1.08203</span></span>
<span class="" style="right:404.4px"><span style="display:inline-block;transform:scaleX(0.89);transform-origin:right center">2025.03.25 17:07:08</span></span>
<span class="" style="right:306.2px"><span style="display:inline-block;transform:scaleX(0.89);transform-origin:right center">1.08083</span></span>
<span class="blue" style="right:66.6px"><span style="display:inline-block;transform:scaleX(0.89);transform-origin:right center">30.00</span></span>
<span class="blue" style="right:2.4px"><span style="display:inline-block;transform:scaleX(0.89);transform-origin:right center">0.11 %</span></span>
</div>
<div class="tr" style="top:487.8px">
<span class="" style="right:947.7px"><span style="display:inline-block;transform:scaleX(0.89);transform-origin:right center">189417062</span></span>
<span class="" style="right:889.2px"><span style="display:inline-block;transform:scaleX(0.89);transform-origin:right center">buy</span></span>
<span class="" style="right:789.8px"><span style="display:inline-block;transform:scaleX(0.89);transform-origin:right center">0.25</span></span>
<span class="" style="right:691.8px"><span style="display:inline-block;transform:scaleX(0.89);transform-origin:right center">1.13130</span></span>
<span class="" style="right:404.4px"><span style="display:inline-block;transform:scaleX(0.89);transform-origin:right center">2025.04.15 16:07:07</span></span>
<span class="" style="right:306.2px"><span style="display:inline-block;transform:scaleX(0.89);transform-origin:right center">1.13250</span></span>
<span class="blue" style="right:66.6px"><span style="display:inline-block;transform:scaleX(0.89);transform-origin:right center">30.00</span></span>
<span class="blue" style="right:2.4px"><span style="display:inline-block;transform:scaleX(0.89);transform-origin:right center">0.11 %</span></span>
</div>
<div class="tr" style="top:500.6px">
<span class="" style="right:947.7px"><span style="display:inline-block;transform:scaleX(0.89);transform-origin:right center">189443136</span></span>
<span class="" style="right:889.2px"><span style="display:inline-block;transform:scaleX(0.89);transform-origin:right center">buy</span></span>
<span class="" style="right:789.8px"><span style="display:inline-block;transform:scaleX(0.89);transform-origin:right center">0.25</span></span>
<span class="" style="right:691.8px"><span style="display:inline-block;transform:scaleX(0.89);transform-origin:right center">1.12889</span></span>
<span class="" style="right:404.4px"><span style="display:inline-block;transform:scaleX(0.89);transform-origin:right center">2025.04.16 03:09:45</span></span>
<span class="" style="right:306.2px"><span style="display:inline-block;transform:scaleX(0.89);transform-origin:right center">1.13019</span></span>
<span class="blue" style="right:66.6px"><span style="display:inline-block;transform:scaleX(0.89);transform-origin:right center">32.50</span></span>
<span class="blue" style="right:2.4px"><span style="display:inline-block;transform:scaleX(0.89);transform-origin:right center">0.12 %</span></span>
</div>
<div class="tr" style="top:513.4px">
<span class="" style="right:947.7px"><span style="display:inline-block;transform:scaleX(0.89);transform-origin:right center">190288197</span></span>
<span class="" style="right:889.2px"><span style="display:inline-block;transform:scaleX(0.89);transform-origin:right center">buy</span></span>
<span class="" style="right:789.8px"><span style="display:inline-block;transform:scaleX(0.89);transform-origin:right center">0.25</span></span>
<span class="" style="right:691.8px"><span style="display:inline-block;transform:scaleX(0.89);transform-origin:right center">1.14340</span></span>
<span class="" style="right:404.4px"><span style="display:inline-block;transform:scaleX(0.89);transform-origin:right center">2025.04.22 20:21:28</span></span>
<span class="" style="right:306.2px"><span style="display:inline-block;transform:scaleX(0.89);transform-origin:right center">1.14460</span></span>
<span class="blue" style="right:66.6px"><span style="display:inline-block;transform:scaleX(0.89);transform-origin:right center">30.00</span></span>
<span class="blue" style="right:2.4px"><span style="display:inline-block;transform:scaleX(0.89);transform-origin:right center">0.10 %</span></span>
</div>
<div class="tr" style="top:526.2px">
<span class="" style="right:947.7px"><span style="display:inline-block;transform:scaleX(0.89);transform-origin:right center">192010922</span></span>
<span class="" style="right:889.2px"><span style="display:inline-block;transform:scaleX(0.89);transform-origin:right center">sell</span></span>
<span class="" style="right:789.8px"><span style="display:inline-block;transform:scaleX(0.89);transform-origin:right center">1</span></span>
<span class="" style="right:691.8px"><span style="display:inline-block;transform:scaleX(0.89);transform-origin:right center">1.12472</span></span>
<span class="" style="right:404.4px"><span style="display:inline-block;transform:scaleX(0.89);transform-origin:right center">2025.05.14 17:24:00</span></span>
<span class="" style="right:306.2px"><span style="display:inline-block;transform:scaleX(0.89);transform-origin:right center">1.12048</span></span>
<span class="blue" style="right:66.6px"><span style="display:inline-block;transform:scaleX(0.89);transform-origin:right center">424.00</span></span>
<span class="blue" style="right:2.4px"><span style="display:inline-block;transform:scaleX(0.89);transform-origin:right center">0.38 %</span></span>
</div>
<div class="tr" style="top:539.0px">
<span class="" style="right:947.7px"><span style="display:inline-block;transform:scaleX(0.89);transform-origin:right center">191975472</span></span>
<span class="" style="right:889.2px"><span style="display:inline-block;transform:scaleX(0.89);transform-origin:right center">sell</span></span>
<span class="" style="right:789.8px"><span style="display:inline-block;transform:scaleX(0.89);transform-origin:right center">0.5</span></span>
<span class="" style="right:691.8px"><span style="display:inline-block;transform:scaleX(0.89);transform-origin:right center">1.11972</span></span>
<span class="" style="right:404.4px"><span style="display:inline-block;transform:scaleX(0.89);transform-origin:right center">2025.05.14 17:24:01</span></span>
<span class="" style="right:306.2px"><span style="display:inline-block;transform:scaleX(0.89);transform-origin:right center">1.12048</span></span>
<span class="red" style="right:66.6px"><span style="display:inline-block;transform:scaleX(0.89);transform-origin:right center">-38.00</span></span>
<span class="red" style="right:2.4px"><span style="display:inline-block;transform:scaleX(0.89);transform-origin:right center">-0.07 %</span></span>
</div>
<div class="tr" style="top:551.8px">
<span class="" style="right:947.7px"><span style="display:inline-block;transform:scaleX(0.89);transform-origin:right center">191946973</span></span>
<span class="" style="right:889.2px"><span style="display:inline-block;transform:scaleX(0.89);transform-origin:right center">sell</span></span>
<span class="" style="right:789.8px"><span style="display:inline-block;transform:scaleX(0.89);transform-origin:right center">0.25</span></span>
<span class="" style="right:691.8px"><span style="display:inline-block;transform:scaleX(0.89);transform-origin:right center">1.11356</span></span>
<span class="" style="right:404.4px"><span style="display:inline-block;transform:scaleX(0.89);transform-origin:right center">2025.05.14 17:24:01</span></span>
<span class="" style="right:306.2px"><span style="display:inline-block;transform:scaleX(0.89);transform-origin:right center">1.12043</span></span>
<span class="red" style="right:66.6px"><span style="display:inline-block;transform:scaleX(0.89);transform-origin:right center">-171.75</span></span>
<span class="red" style="right:2.4px"><span style="display:inline-block;transform:scaleX(0.89);transform-origin:right center">-0.62 %</span></span>
</div>
<div class="a" style="left:1009.4px;top:422px;width:14.6px;height:154px;background:#f4f4f4"></div>
<div class="a" style="left:1009.4px;top:422px;width:10.8px;height:62px;background:#fbfbfb"></div>
<svg class="a" style="left:1009px;top:422px" width="15" height="12"><path d="M3 6.6L5.4 4.2L7.8 6.6" fill="none" stroke="#333" stroke-width="1.1"/></svg>
<div class="a" style="left:0;top:564.5px;width:1009.4px;height:11.5px;background:#c4c4c4"></div>
<div class="a" style="left:1009.6px;top:484px;width:10.6px;height:92px;background:#c6c6c6"></div>
<div class="t" style="left:-1.5px;top:566.6px;font-size:7.4px;font-weight:bold;color:#222">ndrawal: 0.00&nbsp; Balance: 10 581.14</div>
<div class="t" style="right:81.6px;top:566.6px;font-size:7.4px;font-weight:bold;color:#222">635.50</div>
<div id="dlg">
<div class="a" style="left:0;top:0;width:392.6px;height:19.8px;background:#fff"></div>
<div class="t" style="left:5.8px;top:5.6px;font-size:7.7px;color:#161616;-webkit-text-stroke:.15px #222"><span style="display:inline-block;transform:scaleX(0.953);transform-origin:left center">Market Master MT5 (Petko) 1.1</span></div>
<svg class="a" style="left:310px;top:2px" width="80" height="16"><path d="M6.8 7.6H12.6" stroke="#555" stroke-width="1"/><rect x="35.8" y="4.4" width="6" height="6" fill="none" stroke="#c8c8c8" stroke-width=".8"/><path d="M64.6 4.4L71 10.8M71 4.4L64.6 10.8" stroke="#333" stroke-width=".9"/></svg>
<div class="a" style="left:4.6px;top:37.4px;width:383px;height:276.2px;background:#fff;border:.8px solid #dadada"></div>
<div class="a" style="left:5.2px;top:25.8px;width:33.6px;height:12px;background:#f0f0f0;border:.8px solid #d9d9d9;border-bottom:none"></div>
<div class="t" style="left:8.8px;top:28.6px;font-size:7.2px;color:#222"><span style="display:inline-block;transform:scaleX(0.9);transform-origin:left center">Common</span></div>
<div class="a" style="left:38.8px;top:24.4px;width:28.6px;height:14px;background:#fff;border:.8px solid #d9d9d9;border-bottom:none"></div>
<div class="t" style="left:42.6px;top:27.4px;font-size:7.2px;color:#222">Inputs</div>
<div class="a" style="left:12px;top:43.4px;width:297.6px;height:261.8px;background:#fff;border:.9px solid #b2b2b2;overflow:hidden">
<div class="t" style="left:3.8px;top:4.4px;font-size:7.2px;color:#222"><span style="display:inline-block;transform:scaleX(0.94);transform-origin:left center">Variable</span></div>
<div class="t" style="left:150.8px;top:4.4px;font-size:7.2px;color:#222"><span style="display:inline-block;transform:scaleX(0.94);transform-origin:left center">Value</span></div>
<svg class="a" style="left:0;top:0" width="296" height="260">
<rect x="0" y="15.45" width="296" height="12.85" fill="#fff"/>
<rect x="0" y="27.75" width="296" height=".9" fill="#d0d0d0"/>
<rect x="0" y="28.25" width="296" height="12.85" fill="#e9e9e9"/>
<rect x="0" y="40.55" width="296" height=".9" fill="#d0d0d0"/>
<rect x="0" y="41.05" width="296" height="12.85" fill="#fff"/>
<rect x="0" y="53.35" width="296" height=".9" fill="#d0d0d0"/>
<rect x="0" y="53.85" width="296" height="12.85" fill="#e9e9e9"/>
<rect x="0" y="66.15" width="296" height=".9" fill="#d0d0d0"/>
<rect x="0" y="66.65" width="296" height="12.85" fill="#fff"/>
<rect x="0" y="78.95" width="296" height=".9" fill="#d0d0d0"/>
<rect x="0" y="79.45" width="296" height="12.85" fill="#e9e9e9"/>
<rect x="0" y="91.75" width="296" height=".9" fill="#d0d0d0"/>
<rect x="0" y="92.25" width="296" height="12.85" fill="#fff"/>
<rect x="0" y="104.55" width="296" height=".9" fill="#d0d0d0"/>
<rect x="0" y="105.05" width="296" height="12.85" fill="#e9e9e9"/>
<rect x="0" y="117.35" width="296" height=".9" fill="#d0d0d0"/>
<rect x="0" y="117.85" width="296" height="12.85" fill="#fff"/>
<rect x="0" y="130.15" width="296" height=".9" fill="#d0d0d0"/>
<rect x="0" y="130.65" width="296" height="12.85" fill="#e9e9e9"/>
<rect x="0" y="142.95" width="296" height=".9" fill="#d0d0d0"/>
<rect x="0" y="143.45" width="296" height="12.85" fill="#fff"/>
<rect x="0" y="155.75" width="296" height=".9" fill="#d0d0d0"/>
<rect x="0" y="156.25" width="296" height="12.85" fill="#e9e9e9"/>
<rect x="0" y="168.55" width="296" height=".9" fill="#d0d0d0"/>
<rect x="0" y="169.05" width="296" height="12.85" fill="#fff"/>
<rect x="0" y="181.35" width="296" height=".9" fill="#d0d0d0"/>
<rect x="0" y="182.25" width="295.1" height="11.9" fill="#0b6cd2"/>
<rect x="0" y="194.65" width="296" height="12.85" fill="#fff"/>
<rect x="0" y="206.95" width="296" height=".9" fill="#d0d0d0"/>
<rect x="0" y="207.45" width="296" height="12.85" fill="#e9e9e9"/>
<rect x="0" y="219.75" width="296" height=".9" fill="#d0d0d0"/>
<rect x="0" y="220.25" width="296" height="12.85" fill="#fff"/>
<rect x="0" y="232.55" width="296" height=".9" fill="#d0d0d0"/>
<rect x="0" y="233.05" width="296" height="12.85" fill="#e9e9e9"/>
<rect x="0" y="245.35" width="296" height=".9" fill="#d0d0d0"/>
<rect x="146.6" y="0" width=".9" height="245.85" fill="#d8d8d8"/>
</svg>
<div class="row" style="top:16.7px"><span class="h">RISK MANAGEMENT</span></div>
<div class="row" style="top:28.6px"><svg class="ic" viewBox="0 0 9 9"><text x="0.3" y="3.4" font-size="4.2" fill="#3a3f52" font-family="Liberation Sans" font-weight="bold">1</text><path d="M1.8 6.7L6.3 .3" stroke="#3f4862" stroke-width=".95"/><text x="4.7" y="7" font-size="4.4" fill="#3566b8" font-family="Liberation Sans" font-weight="bold">2</text></svg><span class="n">Lot Size</span><span class="v">0.25</span></div>
<div class="row" style="top:41.4px"><svg class="ic" viewBox="0 0 9 9"><path d="M1.8 7.7V.9M.3 2.4L1.8 .6L3.3 2.4M1.9 5.6Q2.2 3.6 6.6 3.3M5.7 1.8L7.3 3.2L5.7 4.8" fill="none" stroke="#3fae4c" stroke-width=".8" stroke-linecap="round"/></svg><span class="n">Use AutoLots?</span><span class="v">false</span></div>
<div class="row" style="top:54.2px"><svg class="ic" viewBox="0 0 9 9"><text x="0.3" y="3.4" font-size="4.2" fill="#3a3f52" font-family="Liberation Sans" font-weight="bold">1</text><path d="M1.8 6.7L6.3 .3" stroke="#3f4862" stroke-width=".95"/><text x="4.7" y="7" font-size="4.4" fill="#3566b8" font-family="Liberation Sans" font-weight="bold">2</text></svg><span class="n">AutoLots Division (of Account Balance)</span><span class="v">100000.0</span></div>
<div class="row" style="top:67.0px"><svg class="ic" viewBox="0 0 9 9"><path d="M1.8 7.7V.9M.3 2.4L1.8 .6L3.3 2.4M1.9 5.6Q2.2 3.6 6.6 3.3M5.7 1.8L7.3 3.2L5.7 4.8" fill="none" stroke="#3fae4c" stroke-width=".8" stroke-linecap="round"/></svg><span class="n">Use Drawdown Stop Loss?</span><span class="v">false</span></div>
<div class="row" style="top:79.8px"><svg class="ic" viewBox="0 0 9 9"><text x="0.3" y="3.4" font-size="4.2" fill="#3a3f52" font-family="Liberation Sans" font-weight="bold">1</text><path d="M1.8 6.7L6.3 .3" stroke="#3f4862" stroke-width=".95"/><text x="4.7" y="7" font-size="4.4" fill="#3566b8" font-family="Liberation Sans" font-weight="bold">2</text></svg><span class="n">Drawdown Limit (in % of Account Balance)</span><span class="v">10.0</span></div>
<div class="row" style="top:92.6px"><svg class="ic" viewBox="0 0 9 9"><path d="M1.8 7.7V.9M.3 2.4L1.8 .6L3.3 2.4M1.9 5.6Q2.2 3.6 6.6 3.3M5.7 1.8L7.3 3.2L5.7 4.8" fill="none" stroke="#3fae4c" stroke-width=".8" stroke-linecap="round"/></svg><span class="n">Stop EA at Drawdown Limit?</span><span class="v">false</span></div>
<div class="row" style="top:106.3px"><span class="h">STRATEGY MANAGEMENT</span></div>
<div class="row" style="top:118.2px"><svg class="ic" viewBox="0 0 9 9"><text x="0.6" y="6.4" font-size="6.4" fill="#c4c2a4" font-family="Liberation Sans" textLength="6.8" lengthAdjust="spacingAndGlyphs">ab</text></svg><span class="n">Entries Start Time (Server)</span><span class="v">02:00</span></div>
<div class="row" style="top:131.0px"><svg class="ic" viewBox="0 0 9 9"><text x="0.6" y="6.4" font-size="6.4" fill="#c4c2a4" font-family="Liberation Sans" textLength="6.8" lengthAdjust="spacingAndGlyphs">ab</text></svg><span class="n">Entries Stop Time (Server)</span><span class="v">21:00</span></div>
<div class="row" style="top:143.8px"><svg class="ic" viewBox="0 0 9 9"><rect x="1.9" y="0" width="3.7" height="7.5" fill="#e0707c"/><rect x=".2" y="2.6" width="7.2" height="2.4" fill="#5876b8"/><path d="M1.9 1.3H5.6M1.9 6.3H5.6" stroke="#f4c4c8" stroke-width=".5"/></svg><span class="n">Trade Direction</span><span class="v">Both</span></div>
<div class="row" style="top:156.6px"><svg class="ic" viewBox="0 0 9 9"><path d="M1.8 7.7V.9M.3 2.4L1.8 .6L3.3 2.4M1.9 5.6Q2.2 3.6 6.6 3.3M5.7 1.8L7.3 3.2L5.7 4.8" fill="none" stroke="#3fae4c" stroke-width=".8" stroke-linecap="round"/></svg><span class="n">Allow Hedging? (When Trade Direction ...</span><span class="v">true</span></div>
<div class="row" style="top:169.4px"><svg class="ic" viewBox="0 0 9 9"><text x="0.1" y="6.3" font-size="5.6" fill="#2f4676" font-family="Liberation Sans" textLength="6.8" lengthAdjust="spacingAndGlyphs">01</text></svg><span class="n">Max Positions (per Buy/Sell Side)</span><span class="v">4</span></div>
<div class="row" style="top:182.2px"><span class="n" style="color:#fff;-webkit-text-stroke:.2px #fff">Grid Step (in Pips)</span><span class="v" style="color:#fff;-webkit-text-stroke:.2px #fff">50.0</span></div>
<div class="row" style="top:195.0px"><svg class="ic" viewBox="0 0 9 9"><text x="0.3" y="3.4" font-size="4.2" fill="#3a3f52" font-family="Liberation Sans" font-weight="bold">1</text><path d="M1.8 6.7L6.3 .3" stroke="#3f4862" stroke-width=".95"/><text x="4.7" y="7" font-size="4.4" fill="#3566b8" font-family="Liberation Sans" font-weight="bold">2</text></svg><span class="n">Step Multiplier</span><span class="v">2.0</span></div>
<div class="row" style="top:207.8px"><svg class="ic" viewBox="0 0 9 9"><text x="0.3" y="3.4" font-size="4.2" fill="#3a3f52" font-family="Liberation Sans" font-weight="bold">1</text><path d="M1.8 6.7L6.3 .3" stroke="#3f4862" stroke-width=".95"/><text x="4.7" y="7" font-size="4.4" fill="#3566b8" font-family="Liberation Sans" font-weight="bold">2</text></svg><span class="n">Profit Target (in Pips)</span><span class="v">12.0</span></div>
<div class="row" style="top:221.5px"><span class="h">EA MANAGEMENT</span></div>
<div class="row" style="top:233.4px"><svg class="ic" viewBox="0 0 9 9"><text x="0.1" y="6.3" font-size="5.6" fill="#2f4676" font-family="Liberation Sans" textLength="6.8" lengthAdjust="spacingAndGlyphs">01</text></svg><span class="n">Magic Number</span><span class="v">123</span></div>
</div>
<svg class="a" style="left:0;top:220px" width="320" height="26"><rect x="11.9" y="5.2" width="297.4" height="14.3" rx="1.2" fill="none" stroke="#f5b4c5" stroke-width="1.7"/></svg>
<div class="btn" style="left:314.2px;top:270.4px;width:66.4px">Load</div>
<div class="btn" style="left:314.2px;top:289.9px;width:66.4px">Save</div>
<div class="btn" style="left:236.8px;top:319px;width:46.2px;border:1.3px solid #0a6cd6;line-height:11.2px">OK</div>
<div class="btn" style="left:287.9px;top:319px;width:46.3px">Cancel</div>
<div class="btn" style="left:339px;top:319px;width:46.5px">Reset</div>
<svg class="a" style="left:384px;top:329px" width="8" height="8"><path d="M6 2h1v1h-1zM4 4h1v1h-1zM6 4h1v1h-1zM2 6h1v1h-1zM4 6h1v1h-1zM6 6h1v1h-1z" fill="#b8b8b8"/></svg>
</div>
<svg class="a" style="left:212.1px;top:352.5px" width="10" height="14" viewBox="0 0 10 14"><path d="M.6 .6V10.6L3 8.4L4.8 12.4L6.4 11.7L4.7 7.8H8Z" fill="#fff" stroke="#111" stroke-width=".8" stroke-linejoin="round"/></svg>
</div></body></html>
